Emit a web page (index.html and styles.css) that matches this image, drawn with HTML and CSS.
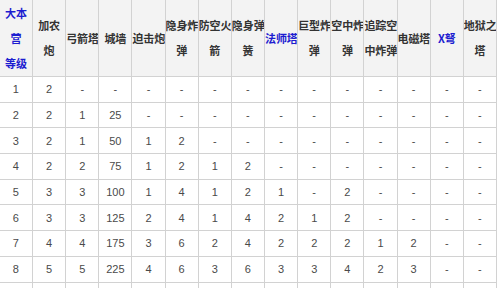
FILE: index.html
```html
<!DOCTYPE html>
<html lang="zh">
<head>
<meta charset="utf-8">
<link rel="stylesheet" href="styles.css">
</head>
<body>
<table class="levels">
<colgroup>
<col><col><col><col><col><col><col><col><col><col><col><col><col><col><col>
</colgroup>
<thead>
<tr class="head">
<th class="link">大本<br>营<br>等级</th>
<th>加农<br>炮</th>
<th>弓箭塔</th>
<th>城墙</th>
<th>迫击炮</th>
<th>隐身炸<br>弹</th>
<th>防空火<br>箭</th>
<th>隐身弹<br>簧</th>
<th class="link">法师塔</th>
<th>巨型炸<br>弹</th>
<th>空中炸<br>弹</th>
<th>追踪空<br>中炸弹</th>
<th>电磁塔</th>
<th class="link">X弩</th>
<th>地狱之<br>塔</th>
</tr>
</thead>
<tbody>
<tr><td>1</td><td>2</td><td>-</td><td>-</td><td>-</td><td>-</td><td>-</td><td>-</td><td>-</td><td>-</td><td>-</td><td>-</td><td>-</td><td>-</td><td>-</td></tr>
<tr><td>2</td><td>2</td><td>1</td><td>25</td><td>-</td><td>-</td><td>-</td><td>-</td><td>-</td><td>-</td><td>-</td><td>-</td><td>-</td><td>-</td><td>-</td></tr>
<tr><td>3</td><td>2</td><td>1</td><td>50</td><td>1</td><td>2</td><td>-</td><td>-</td><td>-</td><td>-</td><td>-</td><td>-</td><td>-</td><td>-</td><td>-</td></tr>
<tr><td>4</td><td>2</td><td>2</td><td>75</td><td>1</td><td>2</td><td>1</td><td>2</td><td>-</td><td>-</td><td>-</td><td>-</td><td>-</td><td>-</td><td>-</td></tr>
<tr><td>5</td><td>3</td><td>3</td><td>100</td><td>1</td><td>4</td><td>1</td><td>2</td><td>1</td><td>-</td><td>2</td><td>-</td><td>-</td><td>-</td><td>-</td></tr>
<tr><td>6</td><td>3</td><td>3</td><td>125</td><td>2</td><td>4</td><td>1</td><td>4</td><td>2</td><td>1</td><td>2</td><td>-</td><td>-</td><td>-</td><td>-</td></tr>
<tr><td>7</td><td>4</td><td>4</td><td>175</td><td>3</td><td>6</td><td>2</td><td>4</td><td>2</td><td>2</td><td>2</td><td>1</td><td>2</td><td>-</td><td>-</td></tr>
<tr><td>8</td><td>5</td><td>5</td><td>225</td><td>4</td><td>6</td><td>3</td><td>6</td><td>3</td><td>3</td><td>4</td><td>2</td><td>3</td><td>-</td><td>-</td></tr>
<tr class="cut"><td></td><td></td><td></td><td></td><td></td><td></td><td></td><td></td><td></td><td></td><td></td><td></td><td></td><td></td><td></td></tr>
</tbody>
</table>
</body>
</html>
```

FILE: styles.css
```css
html, body {
  margin: 0;
  padding: 0;
  background: #ffffff;
  overflow: hidden;
}

.levels {
  border-collapse: collapse;
  table-layout: fixed;
  width: 497.25px;
  margin: -1px 0 0 -1.15px;
  font-family: "Liberation Sans", "Noto Sans CJK SC", sans-serif;
}

.levels col {
  width: 33.15px;
}

.levels th,
.levels td {
  border: 1px solid #d2d2d2;
  padding: 0;
  text-align: center;
  vertical-align: middle;
  white-space: nowrap;
  overflow: hidden;
}

.levels th {
  height: 76px;
  background: #f3f3f3;
  color: #333333;
  font-family: "Noto Sans CJK SC", sans-serif;
  font-size: 11px;
  font-weight: bold;
  line-height: 25px;
  letter-spacing: -0.1px;
}

.levels th.link {
  color: #1c1cd0;
}

.levels td {
  height: 24.7px;
  color: #4a4a4a;
  font-size: 11px;
  line-height: 14px;
}
```
